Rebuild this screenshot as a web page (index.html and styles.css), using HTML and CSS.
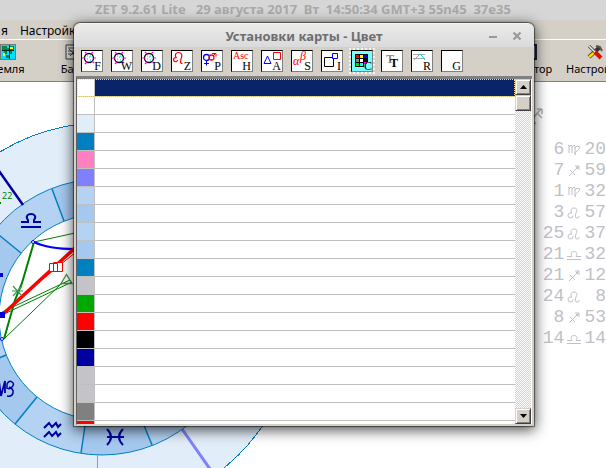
FILE: index.html
```html
<!DOCTYPE html>
<html lang="ru">
<head>
<meta charset="utf-8">
<title>ZET 9.2.61 Lite</title>
<link rel="stylesheet" href="styles.css">
</head>
<body>
<svg class="defs" aria-hidden="true">
  <defs>
    <g id="wheel">
      <circle cx="7" cy="7" r="4.500" fill="none" stroke="#000" stroke-width="1.300"/>
      <path d="M0 7h3M11 7h3M3 1l2 2M11 1l-2 2M3 13l2-2M10 10l2 2" stroke="#f0f" stroke-width="1.200"/>
      <path d="M5 5h1M8 5h1M5 8h1M8 9h1M7 6h1" stroke="#0ff" stroke-width="1.400"/>
    </g>
    <symbol id="leo" viewBox="0 0 14 14"><path d="M6 9.500a2.500 2.500 0 1 1-2-2.500h1C3 5 4 2 7 2c4 0 3 3 2 5s-1 5 1 5 2-1 2-2" fill="none" stroke="currentColor"/></symbol>
    <symbol id="virgo" viewBox="0 0 14 14"><path d="M1 3l1-1v8M2 4l2-2 1 1v7M5 4l2-2 1 1v8l1 1M8 5l2-2 3 1-1 2-5 5" fill="none" stroke="currentColor"/></symbol>
    <symbol id="sagittarius" viewBox="0 0 14 14"><path d="M2 12L12 2M8 2h4v4M3 6l5 5M9 3l2 2" fill="none" stroke="currentColor"/></symbol>
    <symbol id="libra" viewBox="0 0 14 14"><path d="M0 11.500h14M0 8.500h5C3 5 5 3.500 7 3.500s4 1.500 2 5h5" fill="none" stroke="currentColor"/></symbol>
  </defs>
</svg>
<div class="app">
  <header class="app-title">ZET 9.2.61 Lite &nbsp; 29 августа 2017 &nbsp;Вт &nbsp;14:50:34 GMT+3 55n45 &nbsp;37e35</header>
  <nav class="menu"><a href="#">я</a><a href="#">Настройка</a></nav>
  <div class="toolbar">
    <div class="tools-left">
      <button class="tool"><svg width="16" height="16" shape-rendering="crispEdges"><path d="M0 0h16v16H0z" fill="#777"/><path d="M1 1h14v14H1z" fill="#0df"/><path d="M2 2h5v2h3v3H7v3H4V7H2zM10 2h4v5h-2v3h-2zM6 11h4v3H6z" fill="#084"/><path d="M9 3h4v2H9zM3 9h2v3H3z" fill="#ff0"/><path d="M2 6h12M9 1v14" stroke="#023"/></svg><span>Земля</span></button>
      <button class="tool"><svg width="16" height="16"><path d="M1 1h12v14H1z" fill="#ddd" stroke="#333"/><path d="M3 4h7M3 7h7M3 10h7M4 5l8 8M5 12l7-7" stroke="#444"/></svg><span>Банк</span></button>
    </div>
    <div class="tools-right">
      <button class="tool cut"><svg width="16" height="16"><path d="M0 1h14v14H0" fill="#d8d0d8" stroke="#202040" stroke-width="2"/></svg><span>тор</span></button>
      <button class="tool"><svg width="16" height="16"><path d="M2 13L13 3" stroke="#333" stroke-width="4"/><path d="M2 13L9 7" stroke="#fd0" stroke-width="2.500"/><path d="M9 2l4 1 2 4" fill="none" stroke="#555" stroke-width="2"/><path d="M2 2l6 6" stroke="#333" stroke-width="3"/><path d="M2 2l6 6" stroke="#eee" stroke-width="1.500"/><path d="M8 8l6 6" stroke="#d10" stroke-width="4"/></svg><span>Настройки</span></button>
    </div>
  </div>
  <main class="canvas">
    <svg class="chart" width="300" height="386" viewBox="0 82 300 386">
      <circle cx="102" cy="317" r="194" fill="#e1edf9" stroke="#0080c0" shape-rendering="crispEdges"/>
      <circle cx="102" cy="317" r="138" fill="#b4d2f2"/>
      <circle cx="102" cy="317" r="120.500" fill="none" stroke="#a5c8ef" stroke-width="35" pathLength="12" stroke-dasharray="1 1" transform="rotate(-111.300 102 317)"/>
      <circle cx="102" cy="317" r="103" fill="#fff" stroke="#0080c0"/>
      <circle cx="102" cy="317" r="138" fill="none" stroke="#0080c0"/>
      <path d="M52 189l12 32M-6 231l27 22M-1 358l7-3M37 397l-22 27M86 419l-5 34M139 413l13 32" stroke="#0080c0" stroke-width="1.500"/>
      <path d="M-1 171l24 34" stroke="#0000a0" stroke-width="2.500"/>
      <path d="M182 429l28 40" stroke="#8080ff" stroke-width="3"/>
      <path d="M97.500 455v13" stroke="#ff60b8"/>
      <text x="2" y="199" class="degree">22</text><path d="M0 203h1" stroke="green" stroke-width="2"/>
      <path d="M34 242L75 233M2 315L72 282M2 312L70 280M4 339L62 283" stroke="#008000" stroke-width="1" fill="none"/>
      <path d="M34 242L22 283 15 300 4 339" fill="none" stroke="#008000" stroke-width="2"/>
      <path d="M34 242q14 7 41 7" fill="none" stroke="#00f" stroke-width="2"/>
      <path d="M2 315L75 248" stroke="red" stroke-width="3.500"/><path d="M22 296L76 252" stroke="red"/>
      <path d="M49.500 263.500h8v8h-8zM53.500 262.500h9v9h-9z" fill="#fff" stroke="red"/>
      <path d="M61 283.500l5.500-9 5.500 9z" fill="none" stroke="#489040" stroke-width="1.300"/>
      <path d="M12 291h11M13 286l9 10M22 286l-9 10" stroke="#3a9a50" stroke-width="1.200"/>
      <path d="M0 312h5v6H0zM-1 273h4v4h-4z" fill="#0000d0"/>
      <circle cx="33" cy="242" r="1.500" fill="#fff" stroke="#00f"/><circle cx="2" cy="339" r="1.500" fill="#fff" stroke="#00f"/>
      <g fill="none" stroke="#0000a0" stroke-width="2">
        <path d="M21 227h20M21 222h7v-2c-6-8 12-8 6 0v2h7"/>
        <path d="M-1 381l2 15 4-15v12" stroke-width="1.800"/>
        <path d="M7 389V384q2-4 5-2t0 5-4 1M9 387q5 2 4 6t-6 3" stroke-width="1.500"/>
        <path d="M44 428l5-5 3 4 4-4 2 4 3-3M44 437l5-5 3 4 4-4 2 4 3-3"/>
        <path d="M107 429q8 8 0 16M123 429q-8 8 0 16M107 437h17"/>
      </g>
    </svg>
    <svg class="ghost" width="12" height="20" viewBox="0 0 12 20"><path d="M0 12l7-8M3 4h5M8 4v5M3 8l5 5M0 17l2 2" fill="none" stroke="#b0b0b4" stroke-width="1.500"/></svg>
    <table class="positions">
      <tr><td>6</td><td><svg><use href="#virgo"/></svg></td><td>20</td></tr>
      <tr><td>7</td><td><svg><use href="#sagittarius"/></svg></td><td>59</td></tr>
      <tr><td>1</td><td><svg><use href="#virgo"/></svg></td><td>32</td></tr>
      <tr><td>3</td><td><svg><use href="#leo"/></svg></td><td>57</td></tr>
      <tr><td>25</td><td><svg><use href="#leo"/></svg></td><td>37</td></tr>
      <tr><td>21</td><td><svg><use href="#libra"/></svg></td><td>32</td></tr>
      <tr><td>21</td><td><svg><use href="#sagittarius"/></svg></td><td>12</td></tr>
      <tr><td>24</td><td><svg><use href="#leo"/></svg></td><td>8</td></tr>
      <tr><td>8</td><td><svg><use href="#sagittarius"/></svg></td><td>53</td></tr>
      <tr><td>14</td><td><svg><use href="#libra"/></svg></td><td>14</td></tr>
    </table>
  </main>
</div>

<section class="dialog" role="dialog" aria-labelledby="dialog-title">
  <header class="dialog-title">
    <h1 id="dialog-title">Установки карты - Цвет</h1>
    <button class="win-btn" aria-label="Свернуть"><svg width="10" height="10"><path d="M1 6h8" stroke="#999" stroke-width="2"/></svg></button>
    <button class="win-btn" aria-label="Закрыть"><svg width="10" height="10"><path d="M1.500 1.500l7 7M8.500 1.500l-7 7" stroke="#999" stroke-width="2.200"/></svg></button>
  </header>
  <div class="tabs">
    <button class="tab" aria-label="F"><svg><use href="#wheel"/><text x="19" y="19" class="key">F</text></svg></button>
    <button class="tab" aria-label="W"><svg><use href="#wheel"/><text x="20" y="19" class="key">W</text></svg></button>
    <button class="tab" aria-label="D"><svg><use href="#wheel"/><text x="19" y="19" class="key">D</text></svg></button>
    <button class="tab" aria-label="Z"><svg><path d="M5.500 9a2 2 0 1 1-1-2C2 4 4 1.500 6.500 1.500s4 2 3 5-2 6 1 6" fill="none" stroke="red" stroke-width="1.200"/><text x="19" y="19" class="key">Z</text></svg></button>
    <button class="tab" aria-label="P"><svg><circle cx="4.500" cy="6.500" r="3" fill="none" stroke="#00f" stroke-width="1.300"/><path d="M4.500 9.500v5M2 12.500h5" stroke="#00f"/><circle cx="9.500" cy="6.500" r="2.500" fill="none" stroke="red" stroke-width="1.300"/><path d="M11 5l3-3M10 2.500h4v3" fill="none" stroke="red"/><text x="19" y="19" class="key">P</text></svg></button>
    <button class="tab" aria-label="H"><svg><text x="1" y="8" class="asc">Asc</text><text x="19" y="19" class="key">H</text></svg></button>
    <button class="tab" aria-label="A"><svg><path d="M2 12.500L5.500 5 9 12.500z" fill="none" stroke="#00f"/><path d="M11.500 1.500h7v7h-7z" fill="none" stroke="red"/><text x="19" y="19" class="key">A</text></svg></button>
    <button class="tab" aria-label="S"><svg><text x="1" y="14" class="greek">α</text><text x="8" y="9" class="greek">β</text><text x="19" y="19" class="key">S</text></svg></button>
    <button class="tab" aria-label="I"><svg><path d="M2.500 6.500h9v9h-9z" fill="none" stroke="#000"/><path d="M10.500 2.500h5v5h-5z" fill="#fff" stroke="#00f"/><text x="19" y="19" class="key">I</text></svg></button>
    <button class="tab active" aria-label="C" aria-pressed="true"><svg><g shape-rendering="crispEdges"><path d="M3 3h13v13H3z"/><path d="M4 4h3v3H4z" fill="red"/><path d="M8 4h3v3H8z" fill="#ff0"/><path d="M12 4h3v3h-3z" fill="#00f"/><path d="M4 8h3v3H4z" fill="#888"/><path d="M8 8h3v3H8z" fill="#fff"/><path d="M4 12h3v3H4z" fill="#0d0"/><path d="M8 12h3v3H8z" fill="#0ff"/><path d="M12 11h8v8h-8z" fill="#7ff"/><path d="M12 11h3v2h-3z" fill="#f0f"/></g><text x="20" y="19" class="key">C</text></svg></button>
    <button class="tab" aria-label="T"><svg><text x="4" y="12" class="shade">T</text><text x="8" y="16" class="bold">T</text></svg></button>
    <button class="tab" aria-label="R"><svg><path d="M1 3.500h12M1 7.500h12" stroke="#aaa"/><path d="M2 9l4-4 2-2 2 2 3 4" fill="none" stroke="#0dd"/><text x="19" y="19" class="key">R</text></svg></button>
    <button class="tab" aria-label="G"><svg><text x="19" y="19" class="key">G</text></svg></button>
  </div>
  <div class="list-frame">
    <ul class="colors">
      <li class="selected"><i class="white"></i></li>
      <li><i class="white"></i></li>
      <li><i class="pale"></i></li>
      <li><i class="azure"></i></li>
      <li><i class="pink"></i></li>
      <li><i class="violet"></i></li>
      <li><i class="sky"></i></li>
      <li><i class="sky-deep"></i></li>
      <li><i class="sky"></i></li>
      <li><i class="sky-deep"></i></li>
      <li><i class="azure"></i></li>
      <li><i class="silver"></i></li>
      <li><i class="green"></i></li>
      <li><i class="red"></i></li>
      <li><i class="black"></i></li>
      <li><i class="navy"></i></li>
      <li><i class="silver"></i></li>
      <li><i class="silver"></i></li>
      <li><i class="gray"></i></li>
      <li><i class="red"></i></li>
    </ul>
    <div class="scrollbar">
      <button class="scroll-btn" aria-label="Вверх"><svg width="7" height="4"><path d="M0 4l3.500-4L7 4z"/></svg></button>
      <div class="thumb"></div>
      <button class="scroll-btn end" aria-label="Вниз"><svg width="7" height="4"><path d="M0 0l3.500 4L7 0z"/></svg></button>
    </div>
  </div>
</section>
</body>
</html>
```
FILE: styles.css
```css
* { box-sizing: border-box; }
body { margin: 0; overflow: hidden; font-family: "Noto Sans", sans-serif; }
button { border: 0; padding: 0; margin: 0; background: none; font: inherit; color: inherit; }
.defs { position: absolute; width: 0; height: 0; }

.app { display: flex; flex-direction: column; height: 100vh; overflow: hidden; background: #fff; }
.app-title { flex: none; height: 20px; line-height: 19px; background: #d6d6d6; color: #a9a9a9; font-size: 13px; font-weight: 700; text-align: center; white-space: nowrap; }
.menu { flex: none; display: flex; gap: 12px; height: 20px; padding-left: 1px; line-height: 22px; background: #d4d0c8; border-bottom: 1px solid #fff; font-size: 12px; }
.menu a { color: #000; text-decoration: none; }
.toolbar { flex: none; display: flex; justify-content: space-between; height: 42px; padding-top: 4px; background: #d4d0c8; border-bottom: 1px solid #808080; font-size: 11px; }
.tools-left { display: flex; gap: 36px; margin-left: -9px; }
.tools-right { display: flex; width: 72px; gap: 12px; }
.tool { display: flex; flex: none; flex-direction: column; align-items: center; gap: 1px; line-height: 16px; }
.tool.cut { align-items: flex-start; }
.tools-right .tool.cut { width: 20px; }
.tool.cut svg { margin-left: -12px; }

.canvas { position: relative; flex: 1; display: flex; justify-content: flex-end; overflow: hidden; }
.chart { position: absolute; left: 0; top: 0; }
.ghost { position: absolute; right: 60px; top: 23px; }
.degree { font-family: "Noto Sans", sans-serif; font-size: 9px; fill: #008000; }
.positions { align-self: flex-start; margin-top: 57px; border-collapse: collapse; font: 18px/21px "Liberation Mono", monospace; color: #c0c0c8; }
.positions td { height: 21px; padding: 0; text-align: right; }
.positions td:nth-child(2) { width: 20px; text-align: center; }
.positions svg { display: block; width: 14px; height: 14px; margin: 0 auto; }

.dialog { position: absolute; inset: 23px 72px 42px 74px; display: flex; flex-direction: column; padding: 0 3px 1px; background: #d4d0c8; border: 1px solid #f4f4f0; border-width: 1px 0 0; border-radius: 6px 6px 0 0; box-shadow: 0 0 1px 1px rgba(0, 0, 0, .5), 0 3px 14px 1px rgba(0, 0, 0, .7); }
.dialog-title { flex: none; display: flex; align-items: center; gap: 14px; height: 23px; margin: 0 -3px; padding: 0 12px; background: linear-gradient(#ebebeb, #dadada); border-radius: 6px 6px 0 0; }
.dialog-title h1 { flex: 1; margin: 0; padding-left: 48px; color: #6e6e6e; font-size: 13px; line-height: 24px; font-weight: 700; text-align: center; }
.win-btn { display: flex; }
.tabs { flex: none; display: flex; align-items: flex-start; gap: 8px; height: 29px; padding: 3px 0 0 4px; }
.tab { width: 22px; height: 22px; background: #fff; border: 1px solid; border-color: #000 #808080 #808080 #000; }
.tab svg { display: block; width: 20px; height: 20px; overflow: visible; font: 12px "Liberation Serif", serif; }
.tab.active { background: #7ff; outline: 2px dotted #f4f2ee; }
.key { text-anchor: end; }
.asc { fill: red; font-size: 10px; }
.greek { fill: red; font-size: 12px; font-style: italic; }
.shade { fill: #888; font-weight: 700; }
.bold { font-weight: 700; }

.list-frame { flex: 1; min-height: 0; display: flex; margin: 0 -1px; padding-right: 1px; background: #fff; border-top: 3px solid #808080; border-left: 1px solid #606060; border-bottom: 1px solid #d4d0c8; }
.colors { flex: 1; min-width: 0; margin: 0; padding: 0; overflow: hidden; list-style: none; }
.colors li { display: flex; height: 18px; border-bottom: 1px solid #c0c0c0; }
.colors li.selected { background: #0a246a; outline: 1px dotted #f5db95; outline-offset: -1px; }
.colors i { width: 18px; border-right: 1px solid #c0c0c0; }
.white { background: #fff; }
.pale { background: #e1edf9; }
.azure { background: #0080c0; }
.pink { background: #ff80c0; }
.violet { background: #8080ff; }
.sky { background: #b4d2f2; }
.sky-deep { background: #a5c8ef; }
.silver { background: #c3c3c8; }
.green { background: #00a800; }
.red { background: #f00; }
.black { background: #000; }
.navy { background: #0000a0; }
.gray { background: #808080; }

.scrollbar { flex: none; display: flex; flex-direction: column; width: 16px; background: repeating-conic-gradient(#d4d0c8 0 25%, #fff 0 50%) 0 0 / 2px 2px; }
.scroll-btn, .thumb { flex: none; display: flex; align-items: center; justify-content: center; height: 16px; background: #d4d0c8; border: 1px solid; border-color: #d4d0c8 #404040 #404040 #d4d0c8; box-shadow: inset 1px 1px #fff, inset -1px -1px #808080; }
.scroll-btn.end { margin-top: auto; }
```
